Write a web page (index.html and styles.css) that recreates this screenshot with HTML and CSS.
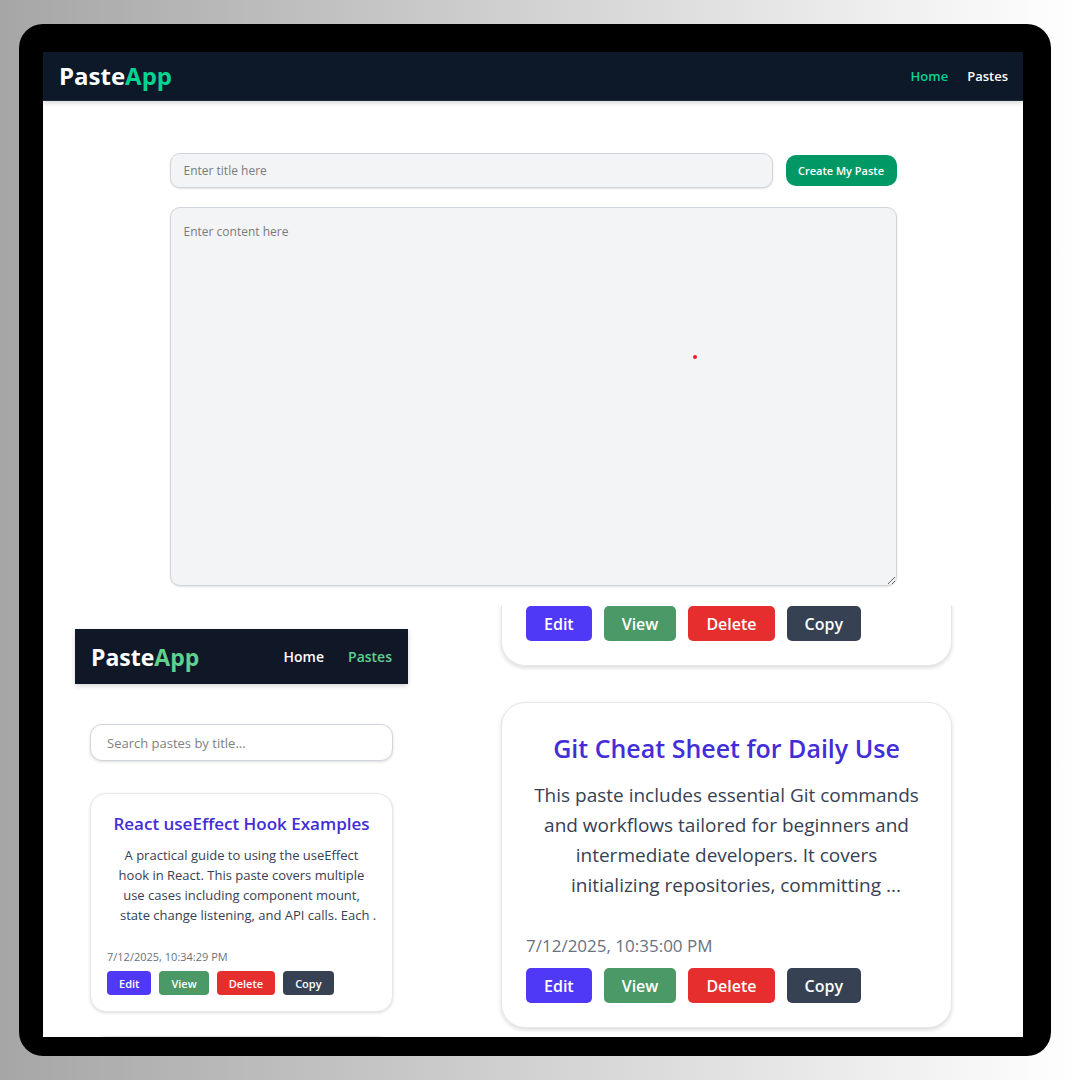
FILE: index.html
```html
<!DOCTYPE html>
<html lang="en">
<head>
<meta charset="utf-8">
<meta name="viewport" content="width=device-width, initial-scale=1">
<title>PasteApp</title>
<link rel="stylesheet" href="styles.css">
</head>
<body>
<div class="device">
  <div class="screen">
    <header class="navbar">
      <a class="brand" href="#">Paste<span class="brand-accent">App</span></a>
      <nav class="nav-links">
        <a class="nav-link active" href="#">Home</a>
        <a class="nav-link" href="#">Pastes</a>
      </nav>
    </header>

    <form class="editor">
      <div class="editor-row">
        <input class="field title-field" type="text" placeholder="Enter title here" aria-label="Title">
        <button class="create-button" type="button">Create My Paste</button>
      </div>
      <div class="content-wrap">
        <textarea class="field content-field" placeholder="Enter content here" aria-label="Content"></textarea>
        <span class="pointer-dot"></span>
      </div>
    </form>

    <div class="previews">
      <section class="mobile">
        <header class="navbar mobile-navbar">
          <a class="brand" href="#">Paste<span class="brand-accent">App</span></a>
          <nav class="nav-links">
            <a class="nav-link" href="#">Home</a>
            <a class="nav-link active" href="#">Pastes</a>
          </nav>
        </header>
        <div class="mobile-body">
          <input class="search" type="search" placeholder="Search pastes by title..." aria-label="Search pastes">
          <article class="card">
            <h2 class="card-title">React useEffect Hook Examples</h2>
            <p class="card-text">A practical guide to using the useEffect<br>hook in React. This paste covers multiple<br>use cases including component mount,<br><span class="last-line">state change listening, and API calls. Each .</span></p>
            <time class="card-date">7/12/2025, 10:34:29 PM</time>
            <div class="actions">
              <button class="action edit" type="button">Edit</button>
              <button class="action view" type="button">View</button>
              <button class="action delete" type="button">Delete</button>
              <button class="action copy" type="button">Copy</button>
            </div>
          </article>
          <article class="card"></article>
        </div>
      </section>

      <section class="closeup">
        <article class="card card-cut">
          <div class="actions">
            <button class="action edit" type="button">Edit</button>
            <button class="action view" type="button">View</button>
            <button class="action delete" type="button">Delete</button>
            <button class="action copy" type="button">Copy</button>
          </div>
        </article>
        <article class="card">
          <h2 class="card-title">Git Cheat Sheet for Daily Use</h2>
          <p class="card-text">This paste includes essential Git commands<br>and workflows tailored for beginners and<br>intermediate developers. It covers<br><span class="last-line">initializing repositories, committing ...</span></p>
          <time class="card-date">7/12/2025, 10:35:00 PM</time>
          <div class="actions">
            <button class="action edit" type="button">Edit</button>
            <button class="action view" type="button">View</button>
            <button class="action delete" type="button">Delete</button>
            <button class="action copy" type="button">Copy</button>
          </div>
        </article>
      </section>
    </div>
  </div>
</div>
</body>
</html>
```
FILE: styles.css
```css
* { box-sizing: border-box; }

body {
  margin: 0;
  height: 100vh;
  display: flex;
  padding: 24px 29px 24px 19px;
  background: linear-gradient(90deg, #a6a6a6, #ffffff);
  font-family: "Open Sans", "Noto Sans", sans-serif;
}

a { text-decoration: none; color: inherit; }
button, input, textarea { font-family: inherit; }

.device {
  flex: 1;
  display: flex;
  min-width: 0;
  padding: 28px 28px 19px 24px;
  border-radius: 24px;
  background: #000;
}

.screen {
  flex: 1;
  min-width: 0;
  overflow: hidden;
  background: #fff;
}

/* Navigation */
.navbar {
  display: flex;
  align-items: center;
  justify-content: space-between;
  height: 49px;
  padding: 0 15px 0 16px;
  border-bottom: 1px solid #1e293b;
  background: #0d1828;
  box-shadow: 0 2px 5px rgba(0, 0, 0, 0.16);
  color: #fff;
}

.brand { font-size: 24px; line-height: 34px; font-weight: 700; }
.brand-accent { color: #00d492; }
.nav-links { display: flex; gap: 19px; }
.nav-link { font-size: 13px; line-height: 20px; font-weight: 600; }
.nav-link.active { color: #00d492; }

/* Editor */
.editor {
  display: flex;
  flex-direction: column;
  gap: 19px;
  max-width: 727px;
  margin: 0 auto;
  padding: 52px 0 19px;
}

.editor-row { display: flex; align-items: center; gap: 13px; }

.field {
  border: 1px solid #d1d5dc;
  border-radius: 10px;
  background: #f3f4f6;
  box-shadow: 0 1px 2px rgba(0, 0, 0, 0.12);
  font-size: 12px;
  line-height: 20px;
  outline: none;
}
.field::placeholder { color: #7b7b7b; }

.title-field { flex: 1; min-width: 0; height: 35px; padding: 0 13px; }

.create-button {
  width: 111px;
  height: 31px;
  padding: 0;
  border: 0;
  border-radius: 10px;
  background: #009966;
  color: #fff;
  font-size: 11px;
  font-weight: 600;
  white-space: nowrap;
}

.content-wrap { position: relative; display: flex; }
.content-field { flex: 1; height: 379px; padding: 14px 13px; resize: both; }

.pointer-dot {
  position: absolute;
  left: 72%;
  top: 148px;
  width: 4px;
  height: 4px;
  border-radius: 50%;
  background: #ee1c1c;
}

/* Previews */
.previews {
  display: grid;
  grid-template-columns: 333px 451px;
  justify-content: start;
  gap: 93px;
  padding-left: 32px;
  overflow: hidden;
}

.mobile { padding-top: 24px; }
.mobile-navbar { height: 55px; padding: 0 16px; border-bottom: 0; background: #101828; }
.mobile-navbar .brand { font-size: 23px; }
.mobile-navbar .nav-links { gap: 24px; }
.mobile-navbar .nav-link { font-size: 14px; }
.mobile-navbar .active, .mobile-navbar .brand-accent { color: #5fd08d; }

.mobile-body {
  display: flex;
  flex-direction: column;
  padding: 40px 15px 0;
}

.search {
  height: 37px;
  margin-bottom: 32px;
  padding: 0 16px;
  border: 1px solid #d1d5dc;
  border-radius: 12px;
  background: #fff;
  box-shadow: 0 1px 3px rgba(0, 0, 0, 0.14);
  font-size: 13px;
}
.search::placeholder { color: #808080; }

.card {
  display: flex;
  flex-direction: column;
  margin-bottom: 24px;
  padding: 16px;
  border: 1px solid #e5e7eb;
  border-radius: 16px;
  background: #fff;
  box-shadow: 0 1px 3px rgba(0, 0, 0, 0.14);
}

.card-title {
  margin: 0 0 7px;
  color: #432dd7;
  font-size: 17px;
  line-height: 28px;
  font-weight: 600;
  text-align: center;
  white-space: nowrap;
}

.card-text {
  margin: 0 0 24px;
  color: #364153;
  font-size: 13px;
  line-height: 20px;
  text-align: center;
  white-space: nowrap;
}
.last-line { padding-left: 1em; }

.card-date { color: #6a7282; font-size: 11px; line-height: 16px; margin-bottom: 6px; }

.actions { display: flex; gap: 8px; }

.action {
  height: 24px;
  padding: 0 12px;
  border: 0;
  border-radius: 4px;
  color: #fff;
  font-size: 11px;
  font-weight: 600;
}
.edit { background: #4f39f6; }
.view { background: #4a9967; }
.delete { background: #e62e2e; }
.copy { background: #364153; }

/* Enlarged cards */
.closeup .card {
  margin-bottom: 36px;
  padding: 24px;
  border-radius: 24px;
  box-shadow: 0 2px 4px rgba(0, 0, 0, 0.14);
}
.closeup .card-cut {
  padding-top: 1px;
  border-top: 0;
  border-radius: 0 0 24px 24px;
}
.closeup .card-title { margin-bottom: 11px; font-size: 25px; line-height: 42px; }
.closeup .card-text { margin-bottom: 34px; font-size: 19px; line-height: 30px; }
.closeup .card-date { margin-bottom: 10px; font-size: 17px; line-height: 24px; }
.closeup .actions { gap: 12px; }
.closeup .action { height: 35px; padding: 0 18px; border-radius: 5px; font-size: 16px; }
```
